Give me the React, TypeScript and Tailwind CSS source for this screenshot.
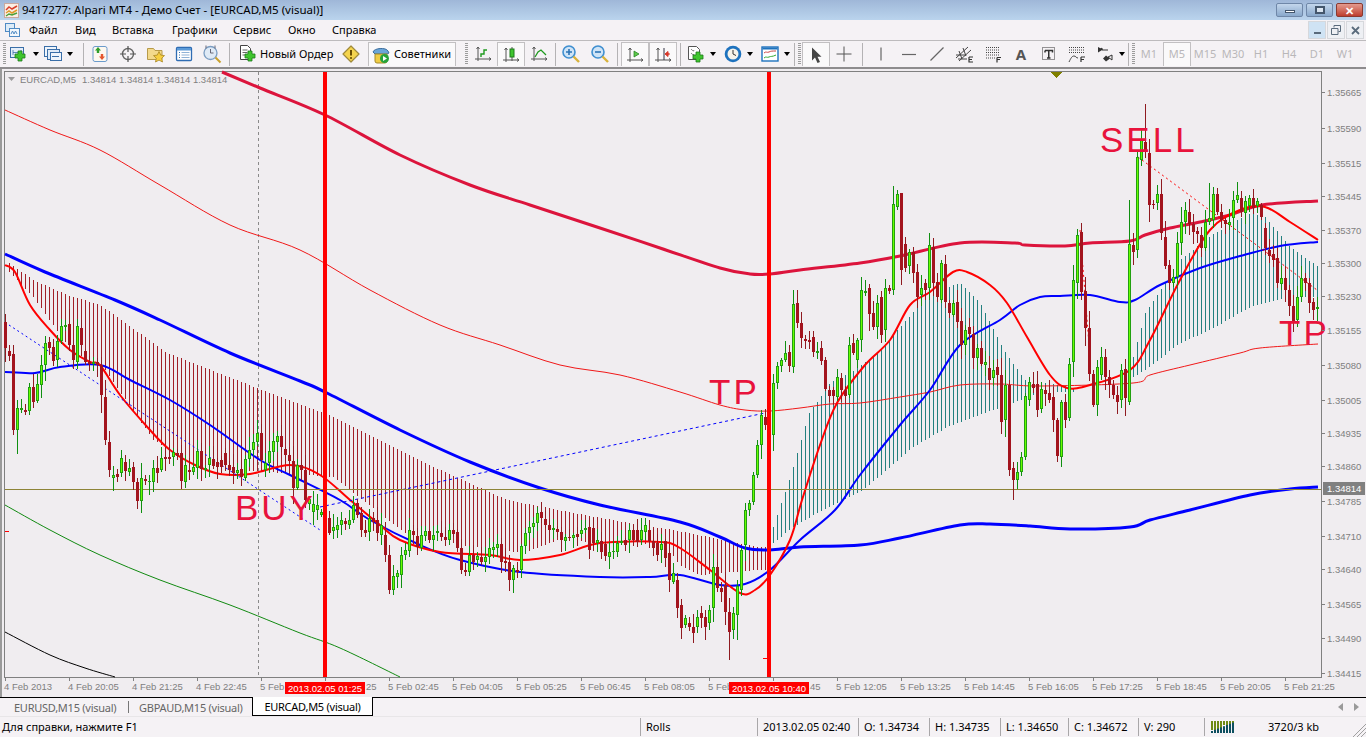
import type { ReactNode } from "react";

const uiFont = "font-['Noto_Sans','Liberation_Sans',sans-serif]";

// bodies left to right: top, bottom, 1 = bull. One bar every 4px starting at x=5
const BARS = `322,348,0 351,356,0 354,430,0 408,430,1 408,410,1 410,412,0 387,411,1 387,402,0 384,401,1 365,385,1 343,365,1 342,348,0 347,361,0 341,360,1 326,341,1 325,327,1 324,345,0 345,360,0 326,362,1 328,345,0 351,362,0 362,364,0 362,364,1 362,365,0 365,395,0 397,440,0 442,470,0 475,478,1 474,477,0 458,473,1 462,471,0 468,472,1 467,482,0 482,501,0 478,501,1 479,481,0 481,482,1 468,482,1 468,473,0 458,470,1 457,459,0 457,459,0 452,457,1 453,456,0 453,481,0 465,482,1 470,472,0 467,472,1 451,468,1 451,469,0 468,470,1 458,465,1 459,466,0 462,467,0 460,467,0 453,465,0 465,470,0 467,473,0 470,473,1 469,477,0 459,478,1 450,459,1 442,450,1 433,442,1 433,460,0 463,470,1 451,463,1 441,452,1 436,442,1 436,447,0 449,455,0 455,461,0 461,488,0 465,488,1 465,470,0 470,500,0 499,504,1 504,512,1 505,510,1 512,515,1 512,520,0 518,533,0 527,531,1 525,530,1 520,525,1 521,524,0 520,525,1 505,520,1 503,515,0 513,530,0 530,533,0 518,532,1 518,522,0 520,533,0 525,535,1 535,555,0 555,590,0 576,590,1 573,577,1 555,575,1 550,555,1 530,551,1 531,535,0 536,547,0 535,548,1 531,536,1 531,540,0 535,540,1 531,533,1 533,537,0 537,540,0 530,540,1 530,534,0 532,548,0 548,570,0 570,572,0 555,572,1 555,562,0 556,560,1 557,562,0 557,562,1 548,557,1 547,550,1 544,548,1 544,562,0 561,563,0 562,580,0 568,580,1 570,572,0 546,570,1 533,546,1 527,533,1 523,527,1 513,523,1 512,518,0 519,525,0 525,530,0 528,530,1 529,532,0 532,540,0 537,541,1 537,538,0 535,538,1 534,537,0 530,534,1 528,530,1 527,550,0 528,543,0 540,543,1 541,552,0 544,556,0 552,557,1 551,552,1 543,552,1 541,543,1 540,545,0 530,540,1 530,540,0 530,542,0 530,540,1 525,532,1 530,541,0 541,548,0 543,555,0 544,550,1 541,558,0 553,580,0 573,582,1 580,608,0 605,628,0 618,625,1 623,627,0 627,633,0 617,627,1 613,618,0 617,627,0 610,623,1 567,608,1 567,588,0 588,592,0 585,612,0 612,632,0 613,630,1 586,615,1 550,590,1 510,545,1 503,510,1 475,502,1 445,475,1 415,445,1 417,425,0 427,445,0 383,435,1 366,383,1 360,366,1 353,360,1 352,366,0 304,367,1 303,323,0 323,338,0 339,341,0 340,342,0 337,352,0 351,353,1 348,361,0 360,389,0 390,396,0 390,396,0 377,397,1 378,390,0 390,396,0 345,395,1 343,353,0 340,360,1 290,340,1 291,293,1 288,314,0 313,327,0 303,327,1 297,335,0 288,330,1 288,291,0 204,290,1 194,207,1 193,270,0 244,268,0 252,266,1 252,273,0 272,297,0 288,295,1 283,290,0 245,288,1 247,283,0 282,297,0 263,300,1 264,302,0 303,313,0 303,315,1 302,322,0 321,345,0 330,345,1 327,334,0 334,358,0 348,358,1 348,364,0 362,365,1 368,380,0 370,378,1 367,375,0 375,422,0 385,420,1 385,470,0 468,480,0 472,480,1 457,472,1 396,457,1 382,400,1 384,388,0 384,410,0 389,409,1 390,394,0 393,400,0 397,420,0 420,456,0 402,457,1 402,420,0 364,418,1 280,362,1 235,283,1 232,292,0 291,328,0 328,374,0 374,405,0 367,405,1 357,375,1 357,377,0 377,385,0 385,395,0 395,402,0 370,400,1 369,398,0 244,402,1 245,252,0 157,250,1 140,160,1 142,152,0 153,205,0 204,205,0 194,203,1 194,233,0 237,266,0 265,283,0 277,283,1 243,277,1 222,243,1 210,222,1 212,224,0 224,232,0 231,234,0 235,248,0 222,248,1 218,222,1 194,220,1 194,212,0 212,220,0 220,224,0 222,225,1 200,218,1 195,200,1 198,212,0 201,213,1 198,206,1 198,208,0 201,206,1 205,217,0 228,248,0 250,256,0 254,260,0 258,283,0 278,284,1 278,290,0 290,306,0 306,322,0 297,320,1 278,297,1 278,283,0 283,303,0 302,310,0 307,309,1`
  .split(" ")
  .map((s) => s.split(",").map(Number));

const WICKS: Record<number, [number, number]> = {
  1145: [104, 158],
  893: [186, 295],
  897: [190, 210],
  901: [193, 285],
  729: [598, 660],
  1013: [462, 500],
  1009: [380, 476],
  1061: [400, 467],
  389: [545, 594],
  1137: [150, 258],
  1129: [200, 405],
  1081: [223, 300],
  13: [345, 435],
  17: [400, 454],
  393: [565, 595],
  1209: [183, 225],
  1237: [182, 203],
  1217: [188, 215],
  737: [580, 640],
};

const rnd = (i: number) => {
  const s = Math.sin(i * 12.9898 + 4.1) * 43758.5453;
  return s - Math.floor(s);
};

const interp = (t: number[][], x: number) => {
  for (let i = 1; i < t.length; i++) {
    if (x <= t[i][0]) {
      const [x0, y0] = t[i - 1];
      const [x1, y1] = t[i];
      return y0 + ((y1 - y0) * (x - x0)) / (x1 - x0);
    }
  }
  return t[t.length - 1][1];
};

// catmull-rom through the points, the moving averages are smooth curves
const smooth = (a: number[][]) => {
  let d = `M${a[0][0]} ${a[0][1]}`;
  for (let i = 0; i < a.length - 1; i++) {
    const p0 = a[Math.max(i - 1, 0)];
    const p1 = a[i];
    const p2 = a[i + 1];
    const p3 = a[Math.min(i + 2, a.length - 1)];
    d += `C${p1[0] + (p2[0] - p0[0]) / 6} ${p1[1] + (p2[1] - p0[1]) / 6} ${p2[0] - (p3[0] - p1[0]) / 6} ${p2[1] - (p3[1] - p1[1]) / 6} ${p2[0]} ${p2[1]}`;
  }
  return d;
};

const CRIMSON = [[222, 72], [260, 88], [325, 115], [400, 155], [470, 185], [530, 205], [600, 228], [660, 248], [720, 268], [750, 274], [770, 274], [800, 270], [860, 263], [900, 256], [960, 243], [1015, 243], [1025, 245], [1065, 246], [1090, 243], [1130, 241], [1145, 235], [1170, 228], [1200, 222], [1230, 215], [1262, 205], [1318, 201]];
const THIN_RED = [[5, 110], [50, 130], [100, 150], [160, 185], [230, 225], [300, 250], [370, 290], [440, 325], [500, 345], [560, 365], [620, 375], [680, 392], [720, 405], [745, 410], [770, 411], [800, 408], [830, 404], [860, 403], [900, 397], [930, 392], [960, 385], [1000, 384], [1040, 386], [1133, 383], [1150, 375], [1190, 365], [1240, 353], [1260, 348], [1318, 344]];
const GREEN = [[5, 505], [50, 530], [100, 555], [160, 580], [230, 605], [300, 633], [340, 648], [400, 677]];
const BLACK = [[5, 632], [50, 655], [85, 668], [115, 677]];
const BLUE_THICK = [[5, 254], [45, 272], [115, 300], [160, 320], [230, 353], [300, 381], [325, 392], [400, 430], [470, 462], [540, 488], [600, 505], [680, 522], [720, 537], [745, 548], [770, 550], [800, 547], [860, 545], [900, 538], [960, 525], [990, 524], [1030, 526], [1070, 529], [1130, 527], [1150, 520], [1190, 510], [1250, 495], [1290, 489], [1318, 487]];
const BLUE = [[5, 372], [35, 373], [60, 367], [100, 365], [130, 380], [170, 400], [210, 425], [260, 460], [290, 475], [340, 500], [370, 520], [420, 545], [460, 560], [520, 572], [600, 577], [650, 577], [680, 575], [720, 585], [745, 584], [770, 570], [800, 540], [835, 510], [860, 475], [900, 425], [930, 390], [960, 345], [1000, 320], [1020, 305], [1040, 297], [1060, 296], [1090, 295], [1120, 302], [1135, 300], [1160, 285], [1200, 268], [1240, 256], [1280, 246], [1318, 242]];
const RED = [[5, 265], [15, 272], [30, 305], [50, 330], [70, 350], [90, 362], [100, 365], [120, 395], [150, 430], [170, 450], [195, 465], [220, 474], [250, 474], [290, 465], [320, 475], [350, 500], [380, 525], [400, 540], [440, 552], [490, 555], [520, 560], [560, 555], [600, 543], [660, 542], [680, 548], [710, 570], [740, 593], [755, 590], [770, 575], [790, 540], [802, 500], [820, 445], [837, 403], [865, 365], [890, 340], [910, 305], [930, 292], [953, 272], [967, 272], [990, 285], [1007, 303], [1027, 337], [1050, 375], [1067, 388], [1090, 385], [1130, 370], [1150, 340], [1180, 280], [1210, 230], [1240, 210], [1265, 207], [1290, 222], [1318, 240]];

const RED_TOP = [[9, 263], [33, 280], [67, 295], [100, 305], [167, 353], [267, 392], [333, 417], [440, 470], [507, 500], [573, 513], [640, 525], [673, 530], [757, 547]];
const RED_BOT = [[9, 272], [33, 297], [67, 345], [100, 363], [153, 440], [200, 467], [333, 477], [407, 535], [473, 547], [523, 553], [557, 540], [607, 543], [666, 545], [680, 566], [700, 575], [757, 570]];
const TEAL_TOP = [[773, 527], [790, 477], [809, 413], [830, 383], [855, 370], [880, 350], [900, 327], [915, 310], [930, 293], [960, 283], [980, 303], [1000, 343], [1010, 360], [1025, 380], [1045, 383], [1075, 388]];
const TEAL_BOT = [[773, 543], [793, 527], [817, 513], [863, 490], [913, 447], [947, 427], [993, 410], [1020, 400], [1040, 392], [1075, 392]];
const TEAL2_TOP = [[1133, 357], [1145, 313], [1180, 260], [1210, 236], [1250, 213], [1265, 217], [1290, 247], [1318, 267]];
const TEAL2_BOT = [[1133, 377], [1145, 370], [1180, 343], [1210, 330], [1250, 307], [1265, 303], [1290, 297], [1318, 297]];

const PRICES: [string, number][] = [["1.35665", 92], ["1.35590", 128], ["1.35515", 163], ["1.35445", 196], ["1.35370", 230], ["1.35300", 263], ["1.35230", 296], ["1.35155", 330], ["1.35080", 365], ["1.35005", 400], ["1.34935", 433], ["1.34860", 466], ["1.34785", 501], ["1.34710", 536], ["1.34640", 569], ["1.34565", 604], ["1.34490", 638], ["1.34415", 673]];
// the red badges hide part of four labels
const TIMES: [string, number][] = [["4 Feb 2013", 4], ["4 Feb 20:05", 68], ["4 Feb 21:25", 132], ["4 Feb 22:45", 196], ["5 Feb", 260], ["25", 366], ["5 Feb 02:45", 388], ["5 Feb 04:05", 452], ["5 Feb 05:25", 516], ["5 Feb 06:45", 580], ["5 Feb 08:05", 644], ["5 Feb", 708], ["45", 810], ["5 Feb 12:05", 836], ["5 Feb 13:25", 900], ["5 Feb 14:45", 964], ["5 Feb 16:05", 1028], ["5 Feb 17:25", 1092], ["5 Feb 18:45", 1156], ["5 Feb 20:05", 1220], ["5 Feb 21:25", 1284]];

function Chart() {
  const sticks: ReactNode[] = [];
  for (let x = 9; x < 1320; x += 4) {
    let top = 0;
    let bot = 0;
    let color = "#a11f27";
    if (x <= 765) {
      top = interp(RED_TOP, x);
      bot = interp(RED_BOT, x);
    } else if (x >= 773 && x <= 1075) {
      top = interp(TEAL_TOP, x);
      bot = interp(TEAL_BOT, x);
      color = "#23807f";
    } else if (x >= 1133) {
      top = interp(TEAL2_TOP, x);
      bot = interp(TEAL2_BOT, x);
      color = "#23807f";
    } else continue;
    sticks.push(<rect key={x} x={x} y={top} width={1} height={bot - top} fill={color} />);
  }

  const candles = BARS.map(([t, b, up], i) => {
    const x = 5 + 4 * i;
    const w = WICKS[x];
    const hi = w ? w[0] : t - 2 - rnd(i) * (b - t > 20 ? 16 : 11);
    const lo = w ? w[1] : b + 2 + rnd(i + 500) * (b - t > 20 ? 16 : 11);
    return (
      <g key={x}>
        <rect x={x} y={hi} width={1} height={lo - hi} fill={up ? "#0f8f10" : "#8f1a20"} />
        <rect x={x - 1} y={t} width={3} height={Math.max(b - t, 1)} fill={up ? "#22a010" : "#a3141e"} />
        {up ? <rect x={x} y={t + 1} width={1} height={Math.max(b - t - 2, 0)} fill="#66ff00" /> : null}
      </g>
    );
  });

  return (
    <svg width={1366} height={628} viewBox="0 69 1366 628" className="block shrink-0 font-['Liberation_Sans',sans-serif]">
      <rect x={0} y={69} width={1366} height={628} fill="#f0edf0" />
      <rect x={0} y={69} width={2} height={628} fill="#9a9a9a" />
      <g shapeRendering="crispEdges">
        <rect x={4} y={71} width={1318} height={1} fill="#808080" />
        <rect x={4} y={71} width={1} height={606} fill="#808080" />
        <rect x={1321} y={71} width={1} height={606} fill="#808080" />
        <rect x={4} y={677} width={1318} height={1} fill="#808080" />
        <line x1={258.5} y1={72} x2={258.5} y2={677} stroke="#8a8a8a" strokeDasharray="3 3" />
        {sticks}
      </g>
      <path d={smooth(GREEN)} fill="none" stroke="#118a11" strokeWidth={1} />
      <path d={smooth(BLACK)} fill="none" stroke="#000" strokeWidth={1} />
      <path d={smooth(THIN_RED)} fill="none" stroke="#f01818" strokeWidth={1} />
      <path d={smooth(CRIMSON)} fill="none" stroke="#dc143c" strokeWidth={3} />
      <path d={smooth(BLUE_THICK)} fill="none" stroke="#0000ff" strokeWidth={3} />
      <path d={smooth(BLUE)} fill="none" stroke="#0000ff" strokeWidth={2} />
      <path d={smooth(RED)} fill="none" stroke="#ff0000" strokeWidth={2} />
      <line x1={9} y1={325} x2={320} y2={530} stroke="#0000ff" strokeDasharray="2 3" />
      <line x1={320} y1={507} x2={765} y2={413} stroke="#0000ff" strokeDasharray="3 3" />
      <line x1={1138} y1={157} x2={1317} y2={290} stroke="#ff0000" strokeDasharray="2 3" />
      <line x1={1080} y1={230} x2={1090} y2={357} stroke="#ff0000" strokeDasharray="2 3" />
      <g shapeRendering="crispEdges">
        <rect x={5} y={489} width={1316} height={1} fill="#8d8437" />
        {candles}
        <rect x={323} y={72} width={4} height={605} fill="#ff0000" />
        <rect x={767} y={72} width={4} height={605} fill="#ff0000" />
        <rect x={5} y={531} width={4} height={1} fill="#ff0000" />
        <rect x={763} y={658} width={5} height={1} fill="#ff0000" />
        <polygon points="1051,72 1062,72 1056.5,78" fill="#808000" />
      </g>

      <polygon points="8,77 15,77 11.5,81" fill="#9a9a9a" />
      <text x={20} y={83} fontSize={9.5} fill="#808080">EURCAD,M5</text>
      <text x={82} y={83} fontSize={9.5} fill="#808080">1.34814 1.34814 1.34814 1.34814</text>

      <g fontSize={35} fill="#e8133c" letterSpacing={3}>
        <text x={235} y={520}>BUY</text>
        <text x={709} y={404}>TP</text>
        <text x={1100} y={152}>SELL</text>
        <text x={1279} y={345}>TP</text>
      </g>

      {PRICES.map(([p, y]) => (
        <g key={p}>
          <rect x={1322} y={y} width={3} height={1} fill="#808080" shapeRendering="crispEdges" />
          <text x={1327} y={y + 3.5} fontSize={9.5} fill="#7f7f7f">{p}</text>
        </g>
      ))}
      <rect x={1323} y={482} width={42} height={13} fill="#808080" />
      <text x={1327} y={492} fontSize={9.5} fill="#fff">1.34814</text>

      {TIMES.map(([t, x]) => (
        <text key={x} x={x} y={690} fontSize={9.5} fill="#7f7f7f">{t}</text>
      ))}
      {Array.from({ length: 21 }, (_, i) => (
        <rect key={i} x={5 + i * 64} y={678} width={1} height={3} fill="#808080" shapeRendering="crispEdges" />
      ))}
      <rect x={285} y={682} width={80} height={12} fill="#ff0000" />
      <text x={288} y={691.5} fontSize={9.5} fill="#fff">2013.02.05 01:25</text>
      <rect x={729} y={682} width={80} height={12} fill="#ff0000" />
      <text x={732} y={691.5} fontSize={9.5} fill="#fff">2013.02.05 10:40</text>
    </svg>
  );
}

function Ic({ children }: { children: ReactNode }) {
  return (
    <svg width={20} height={20} viewBox="0 0 20 20" className="shrink-0">
      {children}
    </svg>
  );
}

const Plus = ({ x = 9, y = 9 }: { x?: number; y?: number }) => (
  <path
    d={`M${x + 3} ${y}h4v3h3v4h-3v3h-4v-3h-3v-4h3z`}
    fill="#3fc52e"
    stroke="#1d7a1a"
    strokeWidth={0.8}
  />
);

function Axes({ color = "#555" }: { color?: string }) {
  return <path d="M5 3v14M2 15h16M3.5 5l1.5-2 1.5 2M16 13.5l2 1.5-2 1.5" fill="none" stroke={color} strokeWidth={1} />;
}

const icons: Record<string, ReactNode> = {
  newChart: (
    <Ic>
      <rect x="1.5" y="3.5" width="13" height="10" fill="#e4eefa" stroke="#3a6ea8" />
      <path d="M4 6v5M12 6v5M4 8.5h8" stroke="#3a6ea8" strokeWidth={0.8} />
      <Plus x={6} y={7} />
    </Ic>
  ),
  profiles: (
    <Ic>
      <rect x="1.5" y="2.5" width="12" height="10" fill="#eef4fb" stroke="#3a6ea8" />
      <rect x="4.5" y="5.5" width="12" height="10" fill="#e0ebf8" stroke="#3a6ea8" />
      <rect x="7.5" y="8.5" width="11" height="8" fill="#eef4fb" stroke="#3a6ea8" />
      <path d="M9 12.5h7" stroke="#3a6ea8" />
    </Ic>
  ),
  market: (
    <Ic>
      <rect x="3" y="2.5" width="14" height="15" rx="2" fill="#fdf8f0" stroke="#6b9bcc" />
      <path d="M8 3l3 3.5H9.2V9H6.8V6.5H5z" fill="#2f9e2a" />
      <path d="M12 16l-3-3.5h1.8V10h2.4v2.5H15z" fill="#e4572e" />
    </Ic>
  ),
  cross: (
    <Ic>
      <circle cx="10" cy="10" r="5.5" fill="none" stroke="#666" strokeWidth={1.4} />
      <path d="M10 2v6M10 12v6M2 10h6M12 10h6" stroke="#555" strokeWidth={1.2} />
    </Ic>
  ),
  folder: (
    <Ic>
      <path d="M1.5 4.5h6l1.5 2h7v9h-14.5z" fill="#f3d98b" stroke="#b79a4a" />
      <path d="M13 7.5l1.7 3.6 3.8.5-2.8 2.6.8 3.8-3.5-1.9-3.5 1.9.8-3.8-2.8-2.6 3.8-.5z" fill="#f7cf3f" stroke="#a98722" strokeWidth={0.8} />
    </Ic>
  ),
  list: (
    <Ic>
      <rect x="2.5" y="3.5" width="15" height="13" rx="1" fill="#fff" stroke="#2f6cb3" strokeWidth={1.3} />
      <rect x="3" y="4" width="14" height="2.5" fill="#5b9ad8" />
      <path d="M5 8.5h1M5 11h1M5 13.5h1" stroke="#2f6cb3" />
      <path d="M7.5 8.5h8M7.5 11h8M7.5 13.5h8" stroke="#8fb2d6" />
    </Ic>
  ),
  tester: (
    <Ic>
      <circle cx="8.5" cy="9" r="6.5" fill="#dfeaf6" stroke="#7b9dc2" strokeWidth={1.3} />
      <path d="M8.5 5v4h3" fill="none" stroke="#667" />
      <path d="M4 1.5v3M13 1.5v3" stroke="#667" />
      <path d="M13.5 13.5l5 5" stroke="#c9a02c" strokeWidth={2} />
    </Ic>
  ),
  order: (
    <Ic>
      <path d="M2.5 1.5h7l3 3v11h-10z" fill="#fff" stroke="#444" />
      <path d="M4.5 6h5M4.5 8.5h5M4.5 11h3" stroke="#666" />
      <Plus x={7} y={7} />
    </Ic>
  ),
  warn: (
    <Ic>
      <path d="M10 2l8 8-8 8-8-8z" fill="#f5d44e" stroke="#a08a3a" strokeLinejoin="round" strokeWidth={1.2} />
      <path d="M10 6v5.5" stroke="#6b4e00" strokeWidth={2} />
      <circle cx="10" cy="14" r="1.1" fill="#6b4e00" />
    </Ic>
  ),
  expert: (
    <Ic>
      <path d="M2 7c1-4 13-5 15-1l1 2-2 1H4z" fill="#6aa5d8" stroke="#3c6e9e" />
      <path d="M4 9h12v7a2 2 0 0 1-2 2H6a2 2 0 0 1-2-2z" fill="#f0cd45" stroke="#a48a2a" />
      <circle cx="13.5" cy="13.5" r="4.5" fill="#27a33a" />
      <path d="M12 11l4 2.5-4 2.5z" fill="#fff" />
    </Ic>
  ),
  bars: (
    <Ic>
      <Axes />
      <path d="M8 13V10h3V6h3" fill="none" stroke="#1f9a1f" strokeWidth={1.4} />
    </Ic>
  ),
  candles: (
    <Ic>
      <Axes />
      <path d="M11 2v14" stroke="#555" />
      <rect x="9" y="4" width="4" height="8" fill="#3fc52e" stroke="#1d7a1a" />
    </Ic>
  ),
  line: (
    <Ic>
      <Axes />
      <path d="M6 13l3-5 3-2 5 5" fill="none" stroke="#1f9a1f" strokeWidth={1.3} />
    </Ic>
  ),
  zoomIn: (
    <Ic>
      <circle cx="8" cy="8" r="6" fill="#cfe4f7" stroke="#3f8fd0" strokeWidth={1.6} />
      <path d="M5 8h6M8 5v6" stroke="#2d74b5" strokeWidth={1.6} />
      <path d="M12.5 12.5l5.5 5.5" stroke="#d9b23a" strokeWidth={2.4} />
    </Ic>
  ),
  zoomOut: (
    <Ic>
      <circle cx="8" cy="8" r="6" fill="#cfe4f7" stroke="#3f8fd0" strokeWidth={1.6} />
      <path d="M5 8h6" stroke="#2d74b5" strokeWidth={1.6} />
      <path d="M12.5 12.5l5.5 5.5" stroke="#d9b23a" strokeWidth={2.4} />
    </Ic>
  ),
  shift: (
    <Ic>
      <Axes />
      <path d="M9 6v6l5-3z" fill="#5cc94a" stroke="#1d7a1a" strokeWidth={0.7} />
    </Ic>
  ),
  scroll: (
    <Ic>
      <Axes />
      <path d="M11 3v12" stroke="#334" />
      <path d="M17 9h-3M16 9h-2l-2 0M15 6.5l-3 2.5 3 2.5z" fill="#d9392b" stroke="#d9392b" />
    </Ic>
  ),
  indicator: (
    <Ic>
      <path d="M2.5 2.5h8l3 3v10h-11z" fill="#fff" stroke="#555" />
      <path d="M5 6c1-2 2 3 3 0M5 10c1-2 2 3 3 0" fill="none" stroke="#666" />
      <Plus x={7} y={8} />
    </Ic>
  ),
  clock: (
    <Ic>
      <circle cx="10" cy="10" r="8.3" fill="#1e72be" />
      <circle cx="10" cy="10" r="5.5" fill="#f6f3ea" />
      <path d="M10 6v4l3 1.5" fill="none" stroke="#333" />
    </Ic>
  ),
  template: (
    <Ic>
      <rect x="2" y="3" width="16" height="14" fill="#fff" stroke="#1e72be" strokeWidth={1.4} />
      <rect x="2.5" y="3.5" width="15" height="2" fill="#1e72be" />
      <path d="M4 9c2-2 3 0 5-1s3-1 7-1" fill="none" stroke="#c44" />
      <path d="M4 14c2-2 3 0 5-1s3 0 7-2" fill="none" stroke="#3a3" />
    </Ic>
  ),
  arrow: (
    <Ic>
      <path d="M6 2.5v13l3-3 2.5 5.5 2.5-1-2.5-5.3H15.5z" fill="#444" />
    </Ic>
  ),
  thin: (
    <Ic>
      <path d="M10 2.5v15M2.5 10h15" stroke="#555" />
    </Ic>
  ),
  vline: (
    <Ic>
      <path d="M10 3.5v13" stroke="#666" strokeWidth={1.2} />
    </Ic>
  ),
  hline: (
    <Ic>
      <path d="M3 10.5h14" stroke="#666" strokeWidth={1.2} />
    </Ic>
  ),
  trend: (
    <Ic>
      <path d="M3.5 16.5l13-13" stroke="#666" strokeWidth={1.2} />
    </Ic>
  ),
  channel: (
    <Ic>
      <path d="M1 14L13 3M4 17L16 6M4 7l3 8M8 4l3 8M1 11h10M3 15h9" fill="none" stroke="#444" strokeWidth={1} />
      <path d="M14 13h4M14 13v5h4M14 15.5h3" fill="none" stroke="#333" strokeWidth={1.2} />
    </Ic>
  ),
  fibo: (
    <Ic>
      <path d="M3 3.5h13M3 6h13M3 8.5h13M3 11h13M3 14h9" stroke="#444" strokeDasharray="1 1" />
      <path d="M14 13.5h4M14 13.5v5M14 15.5h3" fill="none" stroke="#333" strokeWidth={1.2} />
    </Ic>
  ),
  textBox: (
    <Ic>
      <rect x="3.5" y="3.5" width="12" height="12" fill="none" stroke="#333" strokeDasharray="1 1" />
      <path d="M6 6.5h7.5v2M9.75 6.5V14M8 14h3.5M6 6.5v2" fill="none" stroke="#333" strokeWidth={1.5} />
    </Ic>
  ),
  fan: (
    <Ic>
      <path d="M2 3.5h15M2 6h15M2 8.5h15" stroke="#444" strokeDasharray="1 1" />
      <path d="M2 18c2-4 3-6 5-6s2 2 4 2" fill="none" stroke="#444" />
      <path d="M14 13h4M14 13v5M14 15.5h3" fill="none" stroke="#333" strokeWidth={1.2} />
    </Ic>
  ),
  arrows: (
    <Ic>
      <path d="M3 7l4-3v2h6M13 13l4 3v-5z" fill="none" stroke="#333" />
      <path d="M3 3l5 2.5-5 3zM11 11.5l4 3-4 3-3-3zM5 9l4 2" fill="#333" />
    </Ic>
  ),
};

function Caret() {
  return <span className="shrink-0 border-x-[3px] border-t-[4px] border-x-transparent border-t-black" />;
}

function Sep({ className = "" }: { className?: string }) {
  return <div className={`h-[23px] w-px shrink-0 bg-[#b4b2b4] ${className}`} />;
}

function Grip({ className = "" }: { className?: string }) {
  return <div className={`h-[22px] w-[3px] shrink-0 bg-[repeating-linear-gradient(#9c9c9c_0,#9c9c9c_1px,transparent_1px,transparent_2px)] ${className}`} />;
}

function Tool({ name, pressed, className = "" }: { name: string; pressed?: boolean; className?: string }) {
  return (
    <div
      className={`flex h-[24px] w-[28px] shrink-0 items-center justify-center ${
        pressed ? "border-x border-t border-[#c2c0c2] bg-[#faf9fa]" : ""
      } ${className}`}
    >
      {icons[name]}
    </div>
  );
}

function Drop({ name, className = "" }: { name: string; className?: string }) {
  return (
    <div className={`flex h-[24px] shrink-0 items-center justify-center gap-[4px] ${className}`}>
      {icons[name]}
      <Caret />
    </div>
  );
}

function Period({ label, pressed }: { label: string; pressed?: boolean }) {
  return (
    <div
      className={`flex h-[24px] w-[28px] shrink-0 items-center justify-center text-[11px] text-[#b9b7b9] ${
        pressed ? "border-x border-t border-[#c2c0c2] bg-[#faf9fa]" : ""
      }`}
    >
      {label}
    </div>
  );
}

function Toolbar() {
  return (
    <div className="flex h-[29px] w-[1366px] items-center border-t border-b-2 border-[#bdbbbd] border-b-[#8e8c8e] bg-[#f5f2f5] text-black">
      <Grip className="ml-[3px]" />
      <Drop name="newChart" className="ml-[1px] w-[33px]" />
      <Drop name="profiles" className="ml-[1px] w-[33px]" />
      <Sep className="ml-[9px]" />
      <Tool name="market" className="ml-[2px]" />
      <Tool name="cross" />
      <Tool name="folder" />
      <Tool name="list" />
      <Tool name="tester" />
      <Sep className="ml-[3px]" />
      <div className="ml-[5px] flex h-[24px] w-[102px] shrink-0 items-center gap-[2px] pl-[3px] text-[11px] whitespace-nowrap">
        {icons.order}
        <span>Новый Ордер</span>
      </div>
      <Tool name="warn" />
      <div className="ml-[3px] flex h-[24px] w-[88px] shrink-0 items-center gap-[3px] border-x border-t border-[#c2c0c2] bg-[#faf9fa] pl-[2px] text-[11px] whitespace-nowrap">
        {icons.expert}
        <span>Советники</span>
      </div>
      <Grip className="ml-[9px]" />
      <Tool name="bars" className="ml-[1px]" />
      <Tool name="candles" pressed />
      <Tool name="line" />
      <Sep className="ml-[2px]" />
      <Tool name="zoomIn" className="ml-[1px]" />
      <Tool name="zoomOut" className="ml-[1px]" />
      <Sep className="ml-[3px]" />
      <Tool name="shift" pressed className="ml-[3px]" />
      <Tool name="scroll" pressed />
      <Sep className="ml-[3px]" />
      <Drop name="indicator" className="ml-[3px] w-[33px]" />
      <Drop name="clock" className="ml-[3px] w-[36px]" />
      <Drop name="template" className="ml-[1px] w-[35px]" />
      <Sep className="ml-[2px]" />
      <Grip className="ml-[3px]" />
      <Tool name="arrow" pressed className="ml-[1px]" />
      <Tool name="thin" />
      <Sep className="ml-[4px]" />
      <Tool name="vline" className="ml-[4px]" />
      <Tool name="hline" />
      <Tool name="trend" />
      <Tool name="channel" />
      <Tool name="fibo" />
      <div className="flex h-[24px] w-[28px] shrink-0 items-center justify-center text-[15px] font-bold text-[#555]">A</div>
      <Tool name="textBox" />
      <Tool name="fan" />
      <Drop name="arrows" className="w-[37px]" />
      <Sep />
      <Grip className="ml-[3px]" />
      <div className="flex">
        <Period label="M1" />
        <Period label="M5" pressed />
        <Period label="M15" />
        <Period label="M30" />
        <Period label="H1" />
        <Period label="H4" />
        <Period label="D1" />
        <Period label="W1" />
      </div>
    </div>
  );
}

function TitleBar() {
  return (
    <div className="flex h-[20px] w-[1366px] items-center bg-gradient-to-b from-[#9fb7d8] to-[#bad4ed] pl-[4px] text-[11.5px] whitespace-nowrap text-black">
      <svg width={15} height={15} viewBox="0 0 15 15" className="mr-[3px] shrink-0">
        <rect x="0.5" y="0.5" width="14" height="14" fill="#fbeee4" stroke="#c9a9a0" />
        <path d="M2 7l3-3 3 2 5-3" fill="none" stroke="#d8402c" strokeWidth={1.5} />
        <path d="M2 10l3-2 3 2 5-3" fill="none" stroke="#e09a2c" strokeWidth={1.5} />
        <path d="M2 13l3-2 3 1 5-2" fill="none" stroke="#4aa03a" strokeWidth={1.5} />
      </svg>
      <span>9417277: Alpari MT4 - Демо Счет - [EURCAD,M5 (visual)]</span>
      <div className="ml-auto mr-[3px] flex gap-[3px]">
        <div className="flex h-[14px] w-[27px] items-center justify-center rounded-[2px] border border-[#6f87a8] bg-gradient-to-b from-[#c3d6ec] to-[#8aa9cc]">
          <span className="mt-[3px] h-[3px] w-[10px] border border-[#44566c] bg-white" />
        </div>
        <div className="flex h-[14px] w-[27px] items-center justify-center rounded-[2px] border border-[#6f87a8] bg-gradient-to-b from-[#c3d6ec] to-[#8aa9cc]">
          <span className="h-[8px] w-[10px] border-2 border-[#44566c] bg-white/60" />
        </div>
        <div className="flex h-[14px] w-[27px] items-center justify-center rounded-[2px] border border-[#8a3a30] bg-gradient-to-b from-[#e39a8e] to-[#bd3d2f] text-[11px] font-bold leading-none text-white">
          ✕
        </div>
      </div>
    </div>
  );
}

function MenuBar() {
  return (
    <div className="flex h-[20px] w-[1366px] items-center bg-[#f5f2f5] text-[11px] whitespace-nowrap text-black">
      <svg width={15} height={15} viewBox="0 0 15 15" className="ml-[5px] mr-[9px] shrink-0">
        <rect x="0.5" y="0.5" width="9" height="8" fill="#dcebf8" stroke="#4f8ac4" />
        <rect x="4.5" y="5.5" width="10" height="8" fill="#f1f7fc" stroke="#4f8ac4" />
        <path d="M6 11l1.5-3 1.5 3 1.5-3 1.5 3" fill="none" stroke="#4f8ac4" />
      </svg>
      <span className="w-[46px]">Файл</span>
      <span className="w-[37px]">Вид</span>
      <span className="w-[60px]">Вставка</span>
      <span className="w-[61px]">Графики</span>
      <span className="w-[55px]">Сервис</span>
      <span className="w-[44px]">Окно</span>
      <span>Справка</span>
      <div className="ml-auto mr-[2px] flex gap-[1px]">
        <div className="flex h-[18px] w-[18px] items-end justify-center border border-[#d6d8dc] bg-[#cfe3f4] pb-[4px]">
          <span className="h-[2px] w-[7px] bg-[#5a6b7c]" />
        </div>
        <div className="flex h-[18px] w-[18px] items-center justify-center border border-[#d6d8dc] bg-[#eef0f4]">
          <svg width={10} height={10} viewBox="0 0 10 10">
            <path d="M3 2.5V.5h6.5v6H7.5M.5 3.5h6.5v6H.5z" fill="none" stroke="#5a6b7c" />
          </svg>
        </div>
        <div className="flex h-[18px] w-[18px] items-center justify-center border border-[#d6d8dc] bg-[#eef0f4]">
          <svg width={9} height={9} viewBox="0 0 9 9">
            <path d="M1 1l7 7M8 1L1 8" stroke="#5a6b7c" strokeWidth={1.8} />
          </svg>
        </div>
      </div>
    </div>
  );
}

function Tabs() {
  return (
    <div className="flex h-[19px] w-[1366px] items-stretch border-t border-black bg-[#f5f2f5] text-[11px] leading-none tracking-[-0.25px] whitespace-nowrap text-[#666]">
      <div className="ml-[14px] flex w-[114px] items-center">EURUSD,M15 (visual)</div>
      <div className="my-[3px] w-px bg-[#777]" />
      <div className="ml-[10px] flex w-[113px] items-center">GBPAUD,M15 (visual)</div>
      <div className="-mt-px flex w-[121px] items-center justify-center border-x border-b border-black bg-white text-black">EURCAD,M5 (visual)</div>
      <div className="ml-auto mr-[7px] flex items-center gap-[11px]">
        <span className="border-y-[4px] border-r-[5px] border-y-transparent border-r-[#9a9a9a]" />
        <span className="border-y-[4px] border-l-[5px] border-y-transparent border-l-[#9a9a9a]" />
      </div>
    </div>
  );
}

function Cell({ w, children }: { w: string; children?: ReactNode }) {
  return <div className={`flex h-[18px] shrink-0 items-center border-l border-[#a9a7a9] pl-[5px] ${w}`}>{children}</div>;
}

function StatusBar() {
  return (
    <div className="relative flex h-[21px] w-[1366px] items-center border-t border-[#e8e6e8] bg-[#f5f2f5] text-[11px] whitespace-nowrap text-black">
      <div className="w-[640px] shrink-0 pl-[2px]">Для справки, нажмите F1</div>
      <Cell w="w-[117px]">Rolls</Cell>
      <Cell w="w-[101px]">2013.02.05 02:40</Cell>
      <Cell w="w-[71px]">O: 1.34734</Cell>
      <Cell w="w-[71px]">H: 1.34735</Cell>
      <Cell w="w-[68px]">L: 1.34650</Cell>
      <Cell w="w-[70px]">C: 1.34672</Cell>
      <Cell w="w-[66px]">V: 290</Cell>
      <Cell w="w-[162px]">
        <svg width={24} height={12} viewBox="0 0 24 12" className="ml-[1px] shrink-0">
          {[0, 1, 2, 3, 4, 5, 6, 7].map((i) => (
            <rect key={i} x={i * 3} y={0} width={2} height={i > 3 ? 4 : 9} fill="#6d8a14" />
          ))}
          {[0, 1, 2, 3, 4, 5, 6, 7].map((i) => (
            <rect key={i} x={i * 3} y={12 - i * 1.2 - 2} width={2} height={i * 1.2 + 2} fill="#0d4f5f" />
          ))}
        </svg>
        <span className="ml-[33px]">3720/3 kb</span>
      </Cell>
      <svg width={14} height={14} viewBox="0 0 14 14" className="absolute bottom-0 right-0">
        <path d="M14 1L1 14M14 5L5 14M14 9L9 14" stroke="#a0a0a0" />
      </svg>
    </div>
  );
}

export default function App() {
  return (
    <div className={`flex h-[737px] w-[1366px] flex-col overflow-hidden bg-[#f5f2f5] ${uiFont}`}>
      <TitleBar />
      <MenuBar />
      <Toolbar />
      <Chart />
      <Tabs />
      <StatusBar />
    </div>
  );
}
